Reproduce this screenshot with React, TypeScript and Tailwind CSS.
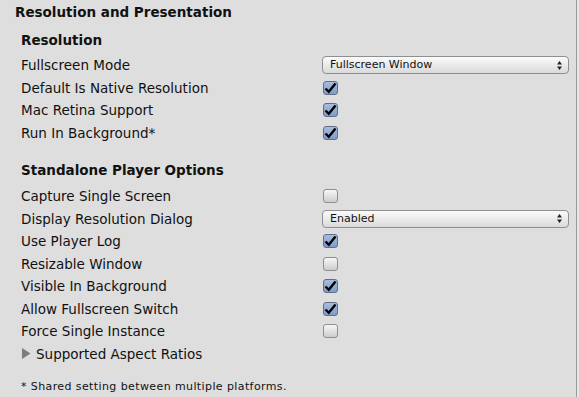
import React from "react";

type Row =
  | { label: string; kind: "check"; on: boolean }
  | { label: string; kind: "select"; value: string };

const resolution: Row[] = [
  { label: "Fullscreen Mode", kind: "select", value: "Fullscreen Window" },
  { label: "Default Is Native Resolution", kind: "check", on: true },
  { label: "Mac Retina Support", kind: "check", on: true },
  { label: "Run In Background*", kind: "check", on: true },
];

const standalone: Row[] = [
  { label: "Capture Single Screen", kind: "check", on: false },
  { label: "Display Resolution Dialog", kind: "select", value: "Enabled" },
  { label: "Use Player Log", kind: "check", on: true },
  { label: "Resizable Window", kind: "check", on: false },
  { label: "Visible In Background", kind: "check", on: true },
  { label: "Allow Fullscreen Switch", kind: "check", on: true },
  { label: "Force Single Instance", kind: "check", on: false },
];

function Checkbox({ on }: { on: boolean }) {
  if (on) {
    return (
      <div className="ml-[1px] w-[15px] h-[14px] rounded-[3px] border border-[#5f6f86] bg-gradient-to-b from-[#a7bde0] to-[#7f9cc8] flex items-center justify-center">
        <svg width="13" height="12" viewBox="0 0 13 12">
          <path d="M1.5 6.5 L4.8 9.8 L11.5 1.5" fill="none" stroke="#000" strokeWidth="2.4" strokeLinejoin="miter" />
        </svg>
      </div>
    );
  }
  return (
    <div className="ml-[1px] w-[15px] h-[14px] rounded-[3px] border border-[#8e8e8e] bg-gradient-to-b from-[#f7f7f7] to-[#cdcdcd]" />
  );
}

function Select({ value }: { value: string }) {
  return (
    <div className="w-[247px] h-[18px] rounded-[4px] border border-[#8f8f8f] bg-gradient-to-b from-[#fbfbfb] to-[#dadada] flex items-center justify-between pl-[7px] pr-[6px]">
      <span className="text-[11px] text-[#111]">{value}</span>
      <svg width="5" height="9" viewBox="0 0 5 9">
        <path d="M2.5 0 L5 3.5 L0 3.5 Z M2.5 9 L5 5.5 L0 5.5 Z" fill="#222" />
      </svg>
    </div>
  );
}

function PropRow({ row }: { row: Row }) {
  return (
    <div className="h-[22.5px] flex items-center">
      <div className="w-[322px] shrink-0 pl-[21px] text-[13.5px] text-[#111]">{row.label}</div>
      {row.kind === "check" ? <Checkbox on={row.on} /> : <Select value={row.value} />}
    </div>
  );
}

export default function App() {
  return (
    <div className="w-[579px] h-[397px] flex bg-[#dedede] overflow-hidden" style={{ fontFamily: '"DejaVu Sans", Verdana, sans-serif' }}>
      <div className="w-[576px] flex flex-col">
        {/* Header */}
        <div className="h-[24px] flex items-center pl-[15px] text-[13.5px] font-bold text-[#111]">
          Resolution and Presentation
        </div>

        <div className="mt-[5px] h-[22px] flex items-center pl-[21px] text-[13.5px] font-bold text-[#111]">
          Resolution
        </div>
        <div className="mt-[3px]">
          {resolution.map((r) => (
            <PropRow key={r.label} row={r} />
          ))}
        </div>

        <div className="mt-[15px] h-[22px] flex items-center pl-[21px] text-[13.5px] font-bold text-[#111]">
          Standalone Player Options
        </div>
        <div className="mt-[4px]">
          {standalone.map((r) => (
            <PropRow key={r.label} row={r} />
          ))}
          <div className="h-[22.5px] flex items-center pl-[22px] text-[13.5px] text-[#111]">
            <svg width="9" height="11" viewBox="0 0 9 11" className="mr-[5px]">
              <path d="M0 0 L8.5 5.5 L0 11 Z" fill="#7d7d7d" />
            </svg>
            Supported Aspect Ratios
          </div>
        </div>

        <div className="mt-[14px] pl-[21px] text-[11px] tracking-[0.4px] text-[#111]">
          * Shared setting between multiple platforms.
        </div>
      </div>
      <div className="w-px bg-[#9c9c9c]" />
      <div className="flex-1 bg-[#e6e6e6]" />
    </div>
  );
}
